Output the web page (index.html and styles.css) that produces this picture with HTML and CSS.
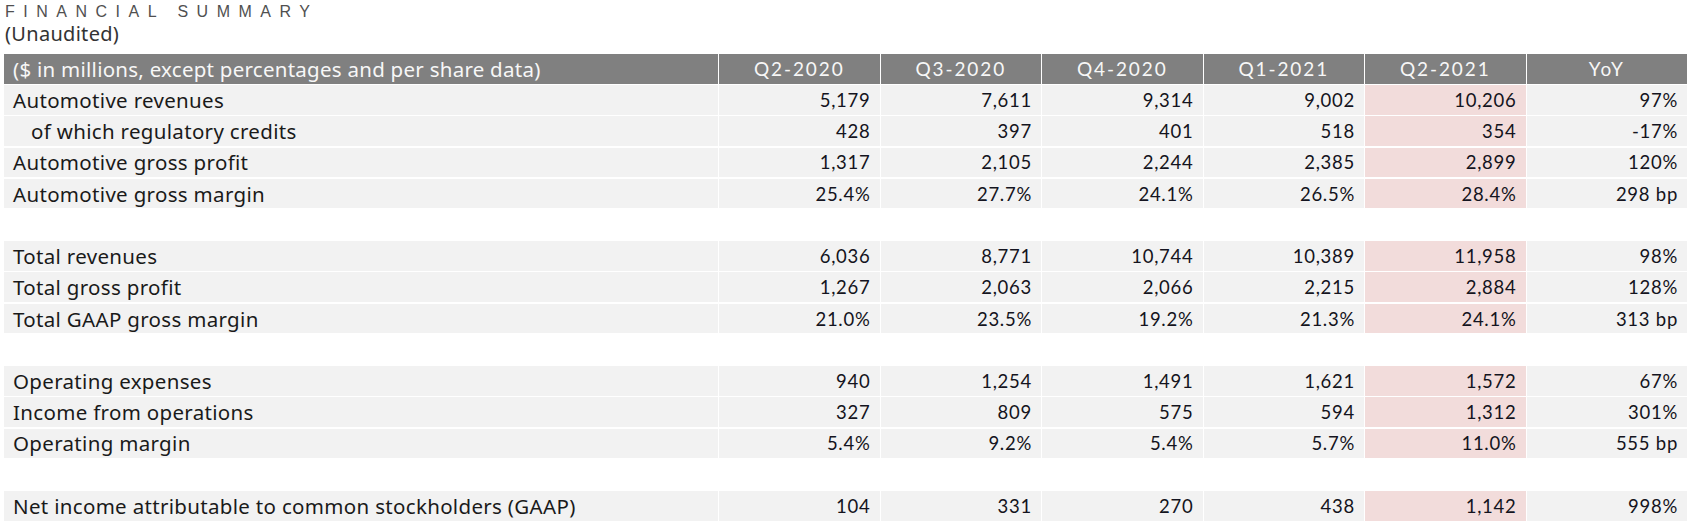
FILE: index.html
```html
<!DOCTYPE html>
<html lang="en">
<head>
<meta charset="utf-8">
<title>Financial Summary</title>
<link rel="stylesheet" href="styles.css">
</head>
<body>
<div class="page">
  <div class="title">FINANCIAL SUMMARY</div>
  <div class="subtitle">(Unaudited)</div>
  <div class="fin-table">
    <div class="cell head label">($ in millions, except percentages and per share data)</div>
    <div class="cell head">Q2-2020</div>
    <div class="cell head">Q3-2020</div>
    <div class="cell head">Q4-2020</div>
    <div class="cell head">Q1-2021</div>
    <div class="cell head">Q2-2021</div>
    <div class="cell head">YoY</div>

    <div class="cell label">Automotive revenues</div>
    <div class="cell num">5,179</div><div class="cell num">7,611</div><div class="cell num">9,314</div><div class="cell num">9,002</div><div class="cell num hl">10,206</div><div class="cell num">97%</div>

    <div class="cell label sub">of which regulatory credits</div>
    <div class="cell num">428</div><div class="cell num">397</div><div class="cell num">401</div><div class="cell num">518</div><div class="cell num hl">354</div><div class="cell num">-17%</div>

    <div class="cell label">Automotive gross profit</div>
    <div class="cell num">1,317</div><div class="cell num">2,105</div><div class="cell num">2,244</div><div class="cell num">2,385</div><div class="cell num hl">2,899</div><div class="cell num">120%</div>

    <div class="cell label">Automotive gross margin</div>
    <div class="cell num">25.4%</div><div class="cell num">27.7%</div><div class="cell num">24.1%</div><div class="cell num">26.5%</div><div class="cell num hl">28.4%</div><div class="cell num">298 bp</div>

    <div class="spacer"></div>

    <div class="cell label">Total revenues</div>
    <div class="cell num">6,036</div><div class="cell num">8,771</div><div class="cell num">10,744</div><div class="cell num">10,389</div><div class="cell num hl">11,958</div><div class="cell num">98%</div>

    <div class="cell label">Total gross profit</div>
    <div class="cell num">1,267</div><div class="cell num">2,063</div><div class="cell num">2,066</div><div class="cell num">2,215</div><div class="cell num hl">2,884</div><div class="cell num">128%</div>

    <div class="cell label">Total GAAP gross margin</div>
    <div class="cell num">21.0%</div><div class="cell num">23.5%</div><div class="cell num">19.2%</div><div class="cell num">21.3%</div><div class="cell num hl">24.1%</div><div class="cell num">313 bp</div>

    <div class="spacer"></div>

    <div class="cell label">Operating expenses</div>
    <div class="cell num">940</div><div class="cell num">1,254</div><div class="cell num">1,491</div><div class="cell num">1,621</div><div class="cell num hl">1,572</div><div class="cell num">67%</div>

    <div class="cell label">Income from operations</div>
    <div class="cell num">327</div><div class="cell num">809</div><div class="cell num">575</div><div class="cell num">594</div><div class="cell num hl">1,312</div><div class="cell num">301%</div>

    <div class="cell label">Operating margin</div>
    <div class="cell num">5.4%</div><div class="cell num">9.2%</div><div class="cell num">5.4%</div><div class="cell num">5.7%</div><div class="cell num hl">11.0%</div><div class="cell num">555 bp</div>

    <div class="spacer"></div>

    <div class="cell label">Net income attributable to common stockholders (GAAP)</div>
    <div class="cell num">104</div><div class="cell num">331</div><div class="cell num">270</div><div class="cell num">438</div><div class="cell num hl">1,142</div><div class="cell num">998%</div>
  </div>
</div>
</body>
</html>
```
FILE: styles.css
```css
html, body {
  margin: 0;
  padding: 0;
  background: #ffffff;
}

.page {
  padding: 0 5px 0 4px;
  font-family: "Noto Sans", "Liberation Sans", sans-serif;
  color: #1a1a1a;
}

.title {
  margin: 2px 0 0 1px;
  font-family: "Liberation Sans", sans-serif;
  font-size: 16px;
  line-height: 20px;
  letter-spacing: 8.5px;
  color: #505050;
}

.subtitle {
  margin-left: 1px;
  font-size: 20px;
  line-height: 24px;
  letter-spacing: 0.3px;
  color: #333333;
}

.fin-table {
  width: 1683px;
  margin-top: 8px;
  display: grid;
  grid-template-columns: 714px repeat(6, 1fr);
  grid-template-rows: 29.5px;
  grid-auto-rows: 29.7px;
  column-gap: 1px;
  row-gap: 1.55px;
}

.cell {
  display: flex;
  align-items: center;
  background: #f2f2f2;
  font-size: 20.5px;
  white-space: nowrap;
  overflow: hidden;
}

.cell.label {
  padding-left: 9px;
  letter-spacing: 0.32px;
}

.cell.label.sub {
  padding-left: 27px;
}

.cell.num {
  justify-content: flex-end;
  padding-right: 9px;
  font-family: "Lato", "Noto Sans", sans-serif;
  font-size: 18.5px;
  letter-spacing: 0.04em;
  color: #141420;
}

.cell.hl {
  background: #f2dcdb;
}

.cell.head {
  background: #808080;
  color: #f7f7f7;
  justify-content: center;
  font-family: "Lato", "Noto Sans", sans-serif;
  font-size: 19px;
  letter-spacing: 0.1em;
}

.cell.head.label {
  justify-content: flex-start;
  font-family: "Noto Sans", "Liberation Sans", sans-serif;
  font-size: 20.5px;
  letter-spacing: 0.26px;
}

.spacer {
  grid-column: 1 / -1;
}
```
